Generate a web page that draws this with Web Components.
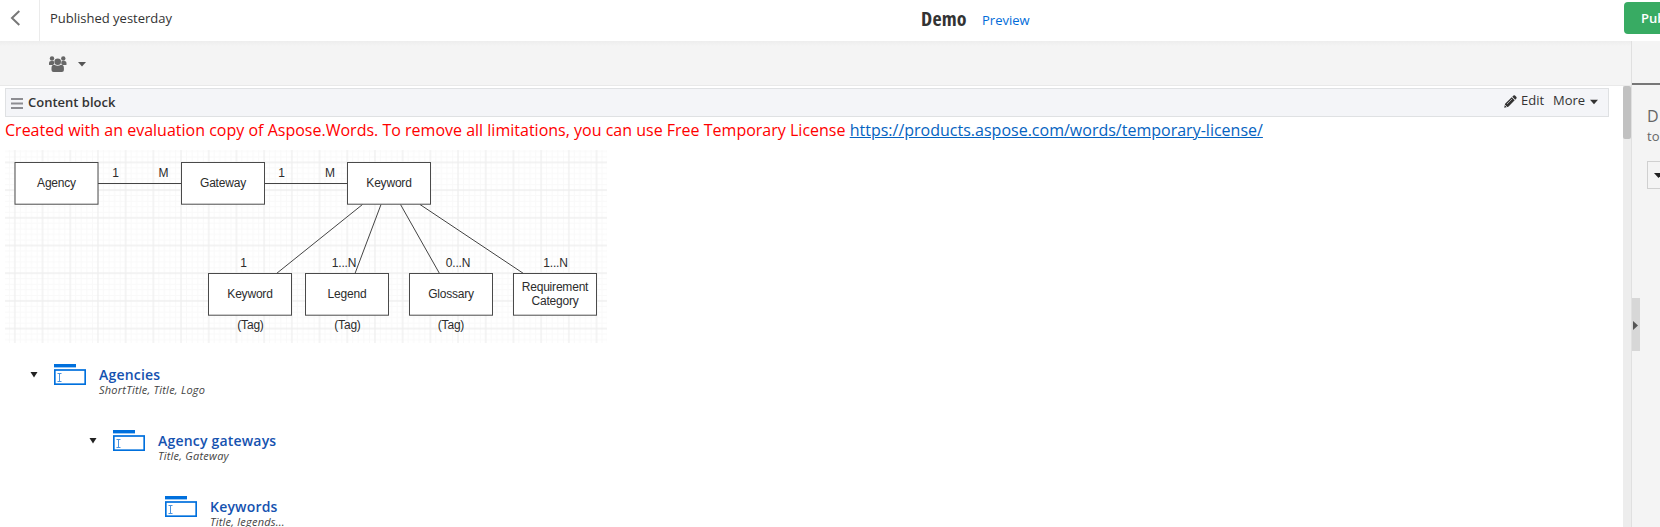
<!DOCTYPE html>
<html lang="en">
<head>
<meta charset="utf-8">
<title>Demo</title>
<style>
html,body{margin:0;height:527px;overflow:hidden;background:#fff;font-family:"Open Sans","Noto Sans",sans-serif;color:#333}
</style>
</head>
<body>
<page-editor></page-editor>
<script>
function define(name, html) {
  const t = document.createElement('template');
  t.innerHTML = html;
  customElements.define(name, class extends HTMLElement {
    constructor() {
      super();
      this.attachShadow({mode: 'open'}).appendChild(t.content.cloneNode(true));
    }
  });
}

define('top-bar', `<style>
:host{display:flex;height:41px;box-sizing:border-box;background:#fff;overflow:hidden}
.back{width:39px;border-right:1px solid #ebebeb;flex:none}
.back svg{display:block;margin:10px 0 0 10px}
.status{width:871px;padding-left:10px;font-size:13px;line-height:36px;flex:none}
h1{margin:0;width:61px;flex:none;font-size:20px;line-height:37px;font-weight:700;font-stretch:75%;letter-spacing:.2px}
a{color:#006cd9;font-size:13px;line-height:41px;width:642px;flex:none}
button{all:unset;box-sizing:border-box;flex:none;width:90px;height:32px;margin-top:2px;padding-left:17px;border-radius:4px;background:#38ab63;color:#fff;font-size:13px;font-weight:600;line-height:33px}
</style>
<div class="back"><svg width="12" height="16" viewBox="0 0 12 16"><path d="M9.3 1L2 8l7.3 7" fill="none" stroke="#777" stroke-width="2"/></svg></div>
<div class="status">Published yesterday</div>
<h1>Demo</h1><a>Preview</a><button>Publish</button>`);

define('tool-bar', `<style>
:host{display:flex;box-sizing:border-box;height:45px;padding:15px 0 0 49px;background:linear-gradient(#ededed,#f4f4f4 5px);border-bottom:1px solid #e9e9e9}
.caret{margin-left:11px}
</style>
<svg width="18" height="17" viewBox="0 0 18 17" fill="#666"><circle cx="3" cy="2.500" r="2.200"/><circle cx="14.300" cy="2.500" r="2.200"/><path d="M0 8.500V7q0-2 2-2h2.200q.8 0 1 .4v2.300L4 9H.8Q0 9 0 8.500zM17.500 8.500V7q0-2-2-2h-2.200q-.8 0-1 .4v2.300L13.500 9h3.200q.8 0 .8-.5z"/><circle cx="8.700" cy="5.700" r="3.300"/><path d="M2.500 14v-2q0-3.200 2.800-3.200 3.400 1.700 6.800 0 2.800 0 2.800 3.200v2q0 2-2 2H4.500q-2 0-2-2z"/></svg>
<svg class="caret" width="8" height="12" viewBox="0 0 8 12"><path d="M0 6h8L4 10.500z" fill="#555"/></svg>`);

define('content-block', `<style>
:host{display:block;padding:2px 0 0 5px;box-sizing:border-box}
header{box-sizing:border-box;width:1604px;height:29px;border:1px solid #dfe1e3;background:#f4f5f8;display:flex;font-size:13px;line-height:23px}
.grip{margin:8px 5px 0 5px}
b{font-weight:600;flex:1;line-height:26px}
.pen{margin:6px 4px 0 0}.edit{width:32px}.more{width:32px}
.dn{margin:9.500px 10px 0 5px}
</style>
<header><svg class="grip" width="12" height="12"><path d="M0 2h12M0 6.500h12M0 11h12" stroke="#8d8d92" stroke-width="1.800"/></svg><b>Content block</b>
<svg class="pen" width="13" height="13" viewBox="0 0 13 13"><path d="M.2 12.800L1.100 8.700 7.700 2.300l3 3L4.300 11.700zM8.300 1.700L9.500.6q.8-.6 1.500 0l1.400 1.300q.6.7 0 1.500l-1.100 1.300z" fill="#333"/><path d="M3 9l5-5" stroke="#f4f5f8" stroke-width=".6"/><path d="M1.300 10.300l1.400 1.400" stroke="#f4f5f8" stroke-width="1"/></svg>
<span class="edit">Edit</span><span class="more">More</span>
<svg class="dn" width="8" height="6"><path d="M0 .8h8L4 5.300z" fill="#333"/></svg></header>
<slot></slot>`);

define('license-note', `<style>
:host{display:block;height:33px;font-size:16px;line-height:27px;color:#f00;white-space:nowrap;letter-spacing:.006px}
a{color:#0563c1;text-decoration:underline}
</style><span>Created with an evaluation copy of Aspose.Words. To remove all limitations, you can use Free Temporary License <a>https://products.aspose.com/words/temporary-license/</a></span>`);

const box = (x, y, label) => `<rect x="${x}" y="${y}" width="83" height="41.700" fill="#fff" stroke="#4a4a4a"/>` +
  label.map((s, i) => `<text x="${x + 41.5}" y="${y + 24.5 + (label.length > 1 ? i * 14 - 7 : 0)}">${s}</text>`).join('');
define('entity-diagram', `<style>
:host{display:block;height:193px}svg{display:block}
text{font:12px "Liberation Sans",Arial,sans-serif;letter-spacing:-.2px;text-anchor:middle;fill:#2c2c2c}
</style><svg width="602" height="193" viewBox="5 150 602 193">
<defs><pattern id="g" x="14.850" y="162.400" width="27.700" height="27.700" patternUnits="userSpaceOnUse">
<path d="M5.540 0v27.700M11.080 0v27.700M16.620 0v27.700M22.160 0v27.700M0 5.540h27.700M0 11.080h27.700M0 16.620h27.700M0 22.160h27.700" stroke="#f9f9f9"/><path d="M0 0v27.700M0 0h27.700M27.700 0v27.700M0 27.700h27.700" stroke="#efefef" stroke-width="1.300"/></pattern></defs>
<rect x="5" y="150" width="602" height="193" fill="url(#g)"/>
<path d="M98 183.500h83M264 183.500h83M362.500 204.500L276.500 273.500M381 204.500L355 273.500M400.500 204.500L439.500 273.500M420 204.500L523.500 273.500" fill="none" stroke="#444"/>
${box(15,162.500,['Agency'])}${box(181.500,162.500,['Gateway'])}${box(347.500,162.500,['Keyword'])}
${box(208.500,273.500,['Keyword'])}${box(305.500,273.500,['Legend'])}${box(409.500,273.500,['Glossary'])}${box(513.500,273.500,['Requirement','Category'])}
<text x="115.500" y="177">1</text><text x="163.500" y="177">M</text><text x="281.500" y="177">1</text><text x="330" y="177">M</text>
<text x="243.500" y="267">1</text><text x="344" y="267">1...N</text><text x="458" y="267">0...N</text><text x="555.500" y="267">1...N</text>
<text x="250.500" y="329">(Tag)</text><text x="347.500" y="329">(Tag)</text><text x="451" y="329">(Tag)</text></svg>`);

define('tree-node', `<style>
:host{display:flex;height:66px;box-sizing:border-box}
.tw{width:24px;flex:none}.tw svg{display:block;margin-top:8px}
.ic{width:45px;flex:none}.ic svg{display:block}
.t{font-size:14px;line-height:20px;font-weight:600;color:#1552b0;white-space:nowrap;margin-top:1px;letter-spacing:.2px}
.s{font-size:11px;line-height:13px;font-style:italic;color:#444;white-space:nowrap;margin-top:-2px;letter-spacing:.23px}
:host([leaf]) .tw svg{visibility:hidden}
</style><div class="tw"><svg width="8" height="7"><path d="M.5 0h7L4 5.500z" fill="#222"/></svg></div>
<div class="ic"><svg width="32" height="21"><path d="M0 0h22v3H0z" fill="#0070dd"/><path d="M0 3h22v1H0z" fill="#9bc8f3"/><rect x=".8" y="6" width="30.400" height="14.200" fill="#fff" stroke="#0070dd" stroke-width="1.700"/><path d="M3.500 9.500h4M3.500 17.500h4M5.500 9.500v8" stroke="#4b94df" fill="none"/></svg></div>
<div><div class="t"><slot></slot></div><div class="s"><slot name="sub"></slot></div></div>`);

define('side-panel', `<style>
:host{display:block;width:28px;box-sizing:border-box;border-left:1px solid #e0e0e0;background:#f4f4f4;overflow:hidden;position:relative}
.tab{height:42px;border-bottom:2px solid #777}
.d{font-size:16px;line-height:22px;padding:20px 0 0 15px;color:#666}
.to{font-size:13px;line-height:18px;padding-left:15px;color:#666}
.sel{margin:16px 0 0 15px;width:60px;height:26px;border:1px solid #d0d0d0}
.sel svg{display:block;margin:11px 0 0 6px}
.handle{position:absolute;left:0;top:257px;width:8px;height:53px;background:#d7d7d7;display:flex;align-items:center}
</style><div class="tab"></div><div class="d">D</div><div class="to">to</div><div class="sel"><svg width="10" height="6"><path d="M0 0h9L4.500 5z" fill="#222"/></svg></div>
<div class="handle"><svg width="6" height="9" style="margin:2px 0 0 1px"><path d="M0 0v9l5-4.500z" fill="#555"/></svg></div>`);

define('page-editor', `<style>
:host{display:block;height:527px;overflow:hidden}
.body{display:flex;height:486px}
.main{flex:1;display:flex;flex-direction:column;min-width:0}
.scroll{display:flex;height:441px}
content-block{flex:1;height:441px;overflow:hidden}
.track{width:8px;background:#ededed;flex:none}.thumb{height:53px;background:#c1c1c1;border-radius:2px}
side-panel{flex:none;width:29px}
.tree{padding-top:21px}
</style>
<top-bar></top-bar>
<div class="body"><div class="main"><tool-bar></tool-bar><div class="scroll">
<content-block><license-note></license-note><entity-diagram></entity-diagram>
<div class="tree"><tree-node style="padding-left:25px">Agencies<span slot="sub">ShortTitle, Title, Logo</span></tree-node>
<tree-node style="padding-left:84px">Agency gateways<span slot="sub">Title, Gateway</span></tree-node>
<tree-node leaf style="padding-left:136px">Keywords<span slot="sub">Title, legends...</span></tree-node></div></content-block>
<div class="track"><div class="thumb"></div></div></div></div><side-panel></side-panel></div>`);
</script>
</body>
</html>
